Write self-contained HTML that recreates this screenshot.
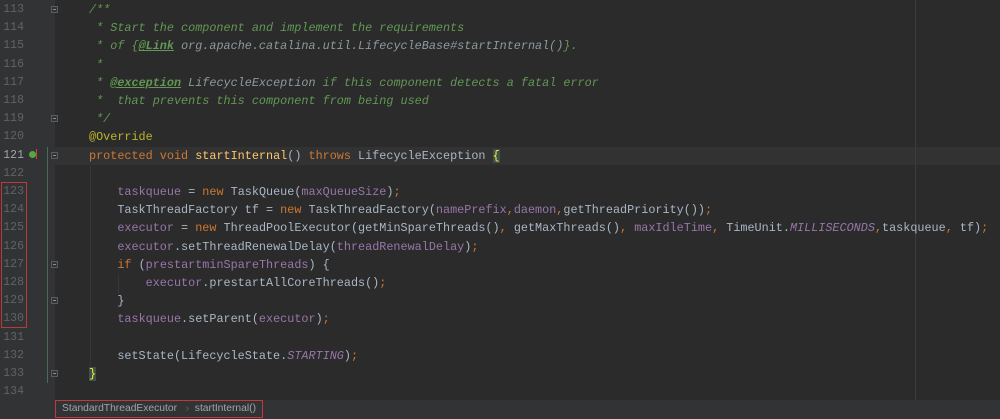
<!DOCTYPE html>
<html><head><style>
body{margin:0;width:1000px;height:419px;overflow:hidden;background:#2b2b2b;position:relative;font-family:"Liberation Mono",monospace;}
#gut{position:absolute;left:0;top:0;width:55px;height:400px;background:#313335;}
.ln{position:absolute;left:0;width:24px;text-align:right;font-size:11.5px;color:#606366;line-height:18.2px;height:18.2px;}
.code{position:absolute;left:89px;white-space:pre;font-size:11.8px;color:#a9b7c6;line-height:18.2px;height:18.2px;}
.k{color:#cc7832}.f{color:#9876aa}.c{color:#629755;font-style:italic}.cd{color:#629755;font-style:italic;text-decoration:underline;font-weight:bold}.ct{color:#8a9b9e;font-style:italic}.a{color:#bbb529}.i{font-style:italic}
#bar{position:absolute;left:0;top:400px;width:1000px;height:19px;background:#313335;}
.fd{position:absolute;left:51px;width:7px;height:7px;border:1px solid #5a5d5f;box-sizing:border-box;background:#313335}
.fd::after{content:"";position:absolute;left:1px;top:2px;width:3px;height:1px;background:#8a8d8f}
</style></head><body>
<div id="gut"></div>
<div style="position:absolute;left:55px;top:147px;width:945px;height:18px;background:#323232"></div>
<div style="position:absolute;left:47px;top:147px;width:1px;height:236px;background:#4a6b55"></div>
<div style="position:absolute;left:915px;top:0;width:1px;height:400px;background:#3c3c3c"></div>
<div style="position:absolute;left:90px;top:166px;width:1px;height:200px;background:#373737"></div>
<div style="position:absolute;left:118px;top:275px;width:1px;height:18px;background:#373737"></div>
<div style="position:absolute;left:1px;top:182px;width:26px;height:146px;border:1px solid #b83a3a;box-sizing:border-box"></div>
<div style="position:absolute;left:29px;top:151px;width:7px;height:7px;border-radius:50%;background:#5aa543"></div>
<div style="position:absolute;left:36px;top:149px;width:1px;height:10px;background:#d0443a"></div>
<div class="fd" style="top:6px"></div>
<div class="fd" style="top:115px"></div>
<div class="fd" style="top:152px"></div>
<div class="fd" style="top:261px"></div>
<div class="fd" style="top:297px"></div>
<div class="fd" style="top:370px"></div>
<div class="ln" style="top:1px">113</div>
<div class="ln" style="top:19.2px">114</div>
<div class="ln" style="top:37.4px">115</div>
<div class="ln" style="top:55.6px">116</div>
<div class="ln" style="top:73.8px">117</div>
<div class="ln" style="top:92px">118</div>
<div class="ln" style="top:110.2px">119</div>
<div class="ln" style="top:128.4px">120</div>
<div class="ln" style="top:146.6px;color:#a4a3a3">121</div>
<div class="ln" style="top:164.8px">122</div>
<div class="ln" style="top:183px">123</div>
<div class="ln" style="top:201.2px">124</div>
<div class="ln" style="top:219.4px">125</div>
<div class="ln" style="top:237.6px">126</div>
<div class="ln" style="top:255.8px">127</div>
<div class="ln" style="top:274px">128</div>
<div class="ln" style="top:292.2px">129</div>
<div class="ln" style="top:310.4px">130</div>
<div class="ln" style="top:328.6px">131</div>
<div class="ln" style="top:346.8px">132</div>
<div class="ln" style="top:365px">133</div>
<div class="ln" style="top:383.2px">134</div>

<div class="code c" style="top:1px">/**</div>
<div class="code c" style="top:19.2px"> * Start the component and implement the requirements</div>
<div class="code c" style="top:37.4px"> * of {<span class="cd">@Link</span> <span class="ct">org.apache.catalina.util.LifecycleBase#startInternal()</span>}.</div>
<div class="code c" style="top:55.6px"> *</div>
<div class="code c" style="top:73.8px"> * <span class="cd">@exception</span> <span class="ct">LifecycleException</span> if this component detects a fatal error</div>
<div class="code c" style="top:92px"> *  that prevents this component from being used</div>
<div class="code c" style="top:110.2px"> */</div>
<div class="code a" style="top:128.4px">@Override</div>
<div class="code" style="top:146.6px"><span class="k">protected void </span><span style="color:#ffc66d">startInternal</span>() <span class="k">throws </span>LifecycleException <span style="background:#3b514d;color:#ffef28">{</span></div>
<div class="code" style="top:183px">    <span class="f">taskqueue</span> = <span class="k">new </span>TaskQueue(<span class="f">maxQueueSize</span>)<span class="k">;</span></div>
<div class="code" style="top:201.2px">    TaskThreadFactory tf = <span class="k">new </span>TaskThreadFactory(<span class="f">namePrefix</span><span class="k">,</span><span class="f">daemon</span><span class="k">,</span>getThreadPriority())<span class="k">;</span></div>
<div class="code" style="top:219.4px">    <span class="f">executor</span> = <span class="k">new </span>ThreadPoolExecutor(getMinSpareThreads()<span class="k">, </span>getMaxThreads()<span class="k">, </span><span class="f">maxIdleTime</span><span class="k">, </span>TimeUnit.<span class="f i">MILLISECONDS</span><span class="k">,</span>taskqueue<span class="k">, </span>tf)<span class="k">;</span></div>
<div class="code" style="top:237.6px">    <span class="f">executor</span>.setThreadRenewalDelay(<span class="f">threadRenewalDelay</span>)<span class="k">;</span></div>
<div class="code" style="top:255.8px">    <span class="k">if </span>(<span class="f">prestartminSpareThreads</span>) {</div>
<div class="code" style="top:274px">        <span class="f">executor</span>.prestartAllCoreThreads()<span class="k">;</span></div>
<div class="code" style="top:292.2px">    }</div>
<div class="code" style="top:310.4px">    <span class="f">taskqueue</span>.setParent(<span class="f">executor</span>)<span class="k">;</span></div>
<div class="code" style="top:346.8px">    setState(LifecycleState.<span class="f i">STARTING</span>)<span class="k">;</span></div>
<div class="code" style="top:365px"><span style="background:#3b514d;color:#ffef28">}</span></div>

<div id="bar"></div>
<div style="position:absolute;left:55px;top:400px;width:208px;height:18px;border:1px solid #c0393b;box-sizing:border-box;font-family:'Liberation Sans',sans-serif;font-size:10.3px;color:#a0a6ab;line-height:16px;white-space:pre;padding-left:6px">StandardThreadExecutor   <span style="color:#666">›</span>  startInternal()</div>
</body></html>
